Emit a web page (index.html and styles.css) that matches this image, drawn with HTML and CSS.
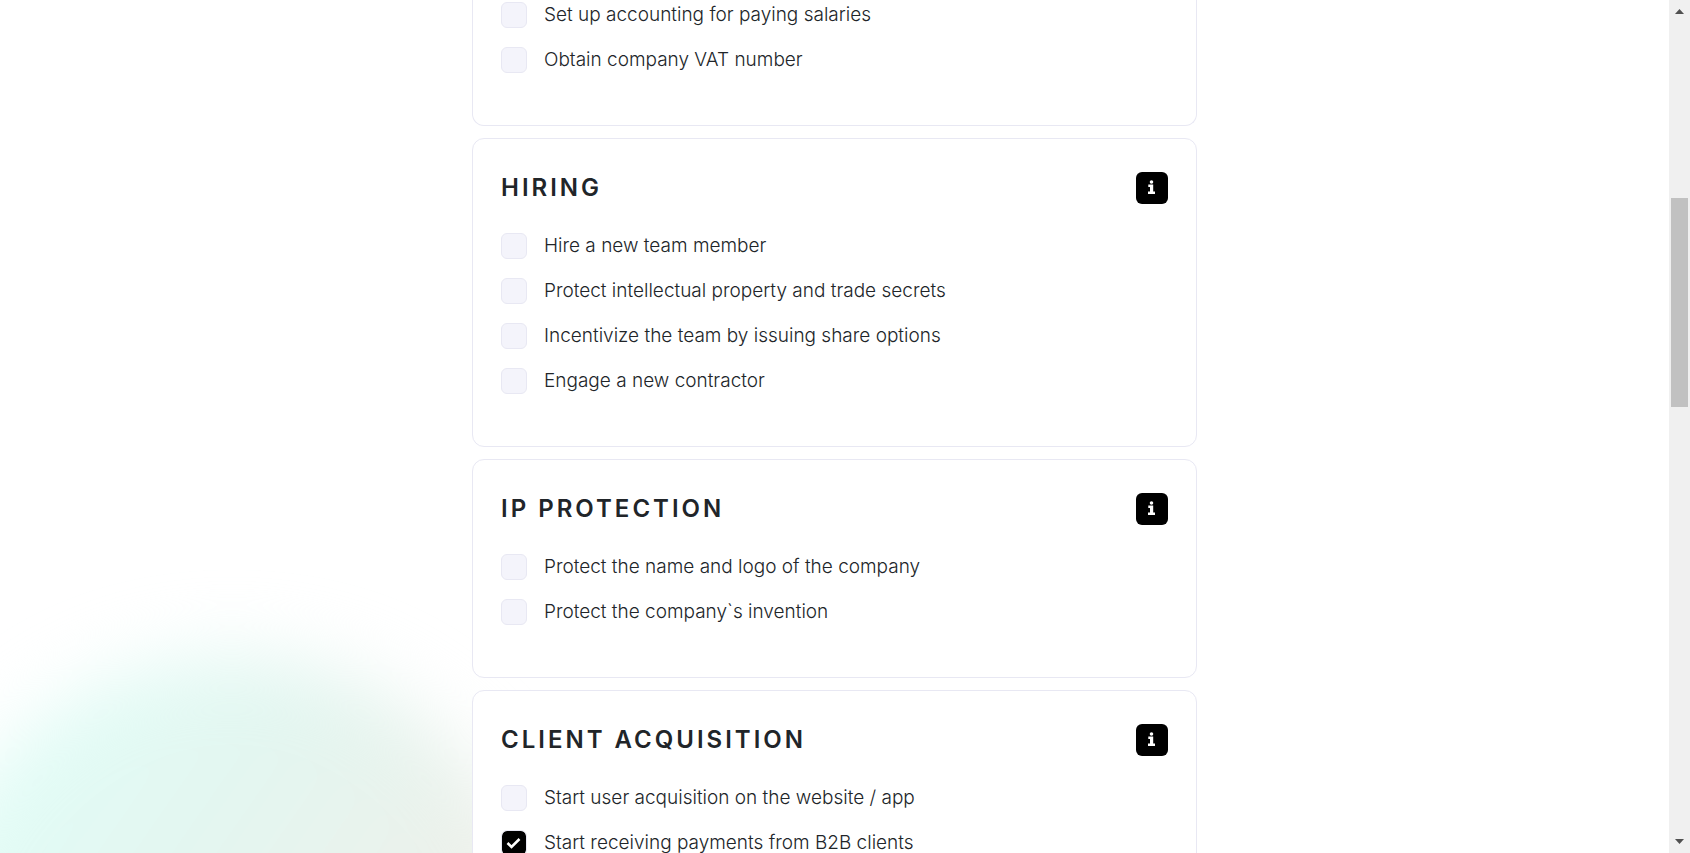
FILE: index.html
```html
<!DOCTYPE html>
<html lang="en">
<head>
<meta charset="utf-8">
<title>Checklist</title>
<link rel="stylesheet" href="styles.css">
</head>
<body>
<div class="page">
  <main class="content">
    <div class="glow"></div>
    <div class="cards">
      <section class="card card-continued">
        <ul class="tasks">
          <li><label class="task"><input type="checkbox"><span>Set up accounting for paying salaries</span></label></li>
          <li><label class="task"><input type="checkbox"><span>Obtain company VAT number</span></label></li>
        </ul>
      </section>
      <section class="card">
        <header class="card-header">
          <h2>HIRING</h2>
          <button class="info" type="button" aria-label="About hiring"><svg viewBox="0 0 7 14"><path d="M1.700 2a1.800 1.800 0 0 1 3.600 0a1.800 1.800 0 0 1-3.600 0zM.3 4.500h4.900v7h1.800V14H0v-2.500h2V7H.3z"/></svg></button>
        </header>
        <ul class="tasks">
          <li><label class="task"><input type="checkbox"><span>Hire a new team member</span></label></li>
          <li><label class="task"><input type="checkbox"><span>Protect intellectual property and trade secrets</span></label></li>
          <li><label class="task"><input type="checkbox"><span>Incentivize the team by issuing share options</span></label></li>
          <li><label class="task"><input type="checkbox"><span>Engage a new contractor</span></label></li>
        </ul>
      </section>
      <section class="card">
        <header class="card-header">
          <h2>IP PROTECTION</h2>
          <button class="info" type="button" aria-label="About IP protection"><svg viewBox="0 0 7 14"><path d="M1.700 2a1.800 1.800 0 0 1 3.600 0a1.800 1.800 0 0 1-3.600 0zM.3 4.500h4.900v7h1.800V14H0v-2.500h2V7H.3z"/></svg></button>
        </header>
        <ul class="tasks">
          <li><label class="task"><input type="checkbox"><span>Protect the name and logo of the company</span></label></li>
          <li><label class="task"><input type="checkbox"><span>Protect the company`s invention</span></label></li>
        </ul>
      </section>
      <section class="card">
        <header class="card-header">
          <h2>CLIENT ACQUISITION</h2>
          <button class="info" type="button" aria-label="About client acquisition"><svg viewBox="0 0 7 14"><path d="M1.700 2a1.800 1.800 0 0 1 3.600 0a1.800 1.800 0 0 1-3.600 0zM.3 4.500h4.900v7h1.800V14H0v-2.500h2V7H.3z"/></svg></button>
        </header>
        <ul class="tasks">
          <li><label class="task"><input type="checkbox"><span>Start user acquisition on the website / app</span></label></li>
          <li><label class="task"><span class="tick"><input type="checkbox" checked><svg viewBox="0 0 26 26"><path d="M6.500 13l4 4 8-8"/></svg></span><span>Start receiving payments from B2B clients</span></label></li>
        </ul>
      </section>
    </div>
  </main>
  <div class="scrollbar" aria-hidden="true">
    <svg class="arrow" viewBox="0 0 9 5"><path d="M0 5h9L4.500 0z"/></svg>
    <div class="track"><div class="thumb"></div></div>
    <svg class="arrow" viewBox="0 0 9 5"><path d="M0 0h9L4.500 5z"/></svg>
  </div>
</div>
</body>
</html>
```
FILE: styles.css
```css
* {
  box-sizing: border-box;
}

body {
  margin: 0;
  font-family: Inter, "Liberation Sans", sans-serif;
  color: #212529;
  background: #fff;
}

.page {
  display: flex;
  height: 100vh;
  overflow: hidden;
}

.content {
  position: relative;
  flex: 1;
  overflow: hidden;
}

.glow {
  position: absolute;
  left: -88px;
  top: 655px;
  width: 640px;
  height: 640px;
  border-radius: 50%;
  background: linear-gradient(125deg, #e2fdf7 15%, #e3f6f0 38%, #eef0ea 68%);
  filter: blur(36px);
}

.cards {
  position: relative;
  display: flex;
  flex-direction: column;
  gap: 12px;
  max-width: 725px;
  margin: 0 auto;
}

.card {
  padding: 33px 28px;
  border: 1px solid #e8e8f3;
  border-radius: 12px;
  background: #fff;
}

.card-continued {
  padding-top: 2px;
  border-top: 0;
  border-top-left-radius: 0;
  border-top-right-radius: 0;
}

.card-header {
  display: flex;
  align-items: center;
  justify-content: space-between;
  margin-bottom: 29px;
}

h2 {
  margin: 0;
  font-size: 24px;
  line-height: 32px;
  font-weight: 600;
  letter-spacing: 3px;
}

.info {
  display: grid;
  place-items: center;
  width: 32px;
  height: 32px;
  padding: 0 1px 2px 0;
  border: 0;
  border-radius: 6px;
  background: #000;
}

.info svg {
  width: 7px;
  height: 14px;
  fill: #fff;
}

.tasks {
  margin: 0;
  padding: 0;
  list-style: none;
}

.task {
  display: flex;
  align-items: flex-start;
  gap: 17px;
  height: 45px;
  font-size: 19px;
  line-height: 26px;
  font-weight: 300;
}

.task input {
  appearance: none;
  flex: none;
  display: block;
  width: 26px;
  height: 26px;
  margin: 0;
  border: 1px solid #e8e8f3;
  border-radius: 6px;
  background: #f4f4fb;
}

.task input:checked {
  background: #000 padding-box;
}

.tick {
  display: grid;
}

.tick > * {
  grid-area: 1 / 1;
}

.tick svg {
  width: 26px;
  height: 26px;
  fill: none;
  stroke: #fff;
  stroke-width: 2.5;
  pointer-events: none;
}

.scrollbar {
  display: flex;
  flex-direction: column;
  align-items: center;
  width: 21px;
  padding: 9px 0;
  background: #f0f0f0;
}

.arrow {
  width: 9px;
  height: 5px;
  fill: #505050;
}

.track {
  flex: 1;
  width: 17px;
  padding-top: 184px;
}

.thumb {
  height: 209px;
  background: #c1c1c1;
}
```
